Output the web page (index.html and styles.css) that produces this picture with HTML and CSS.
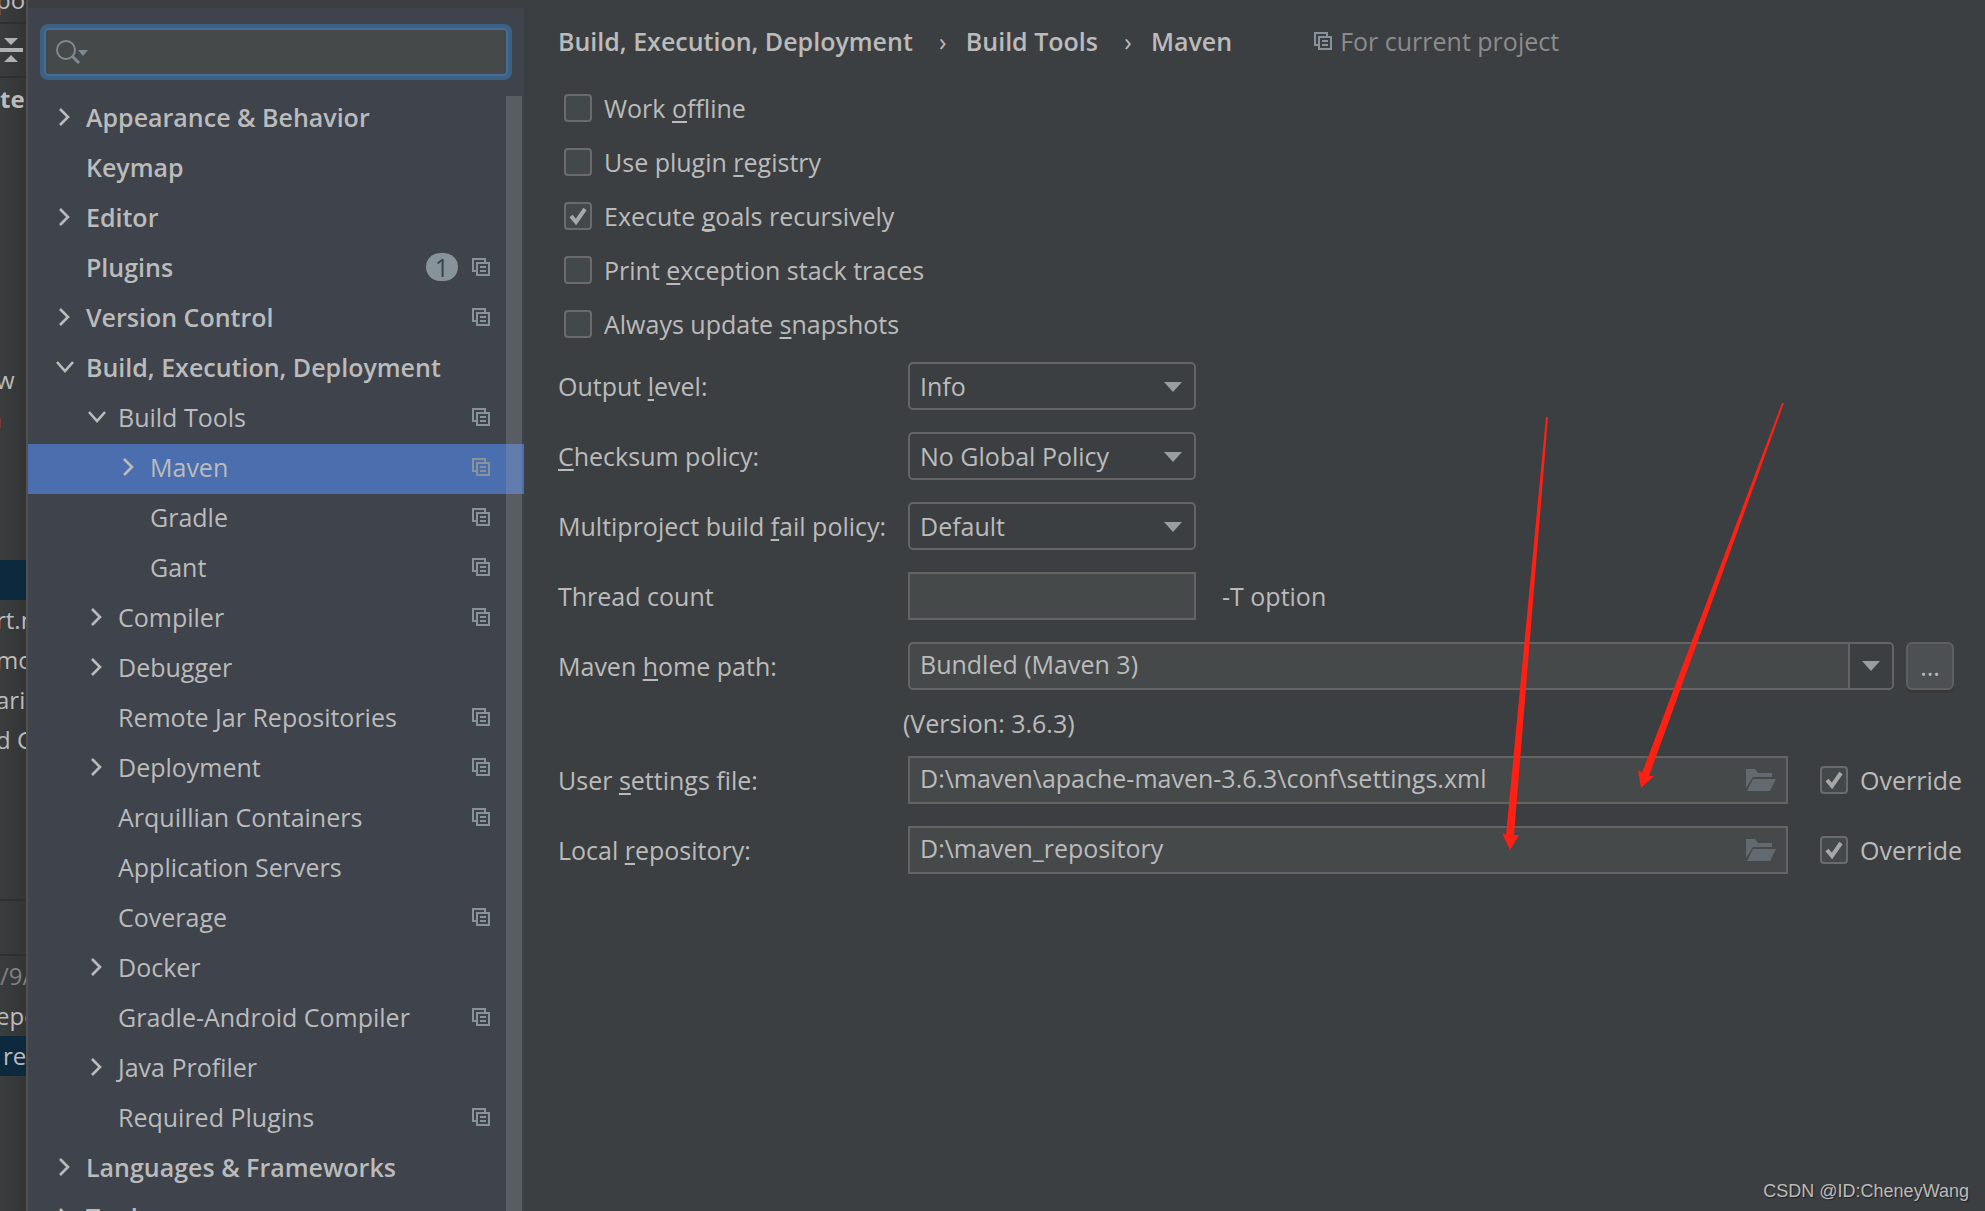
FILE: index.html
```
<!DOCTYPE html>
<html lang="en">
<head>
<meta charset="utf-8">
<title>Settings</title>
<link rel="stylesheet" href="styles.css">
</head>
<body>
<svg class="defs" aria-hidden="true">
  <symbol id="copy" viewBox="0 0 18 18"><path d="M4 13H1V1H13V4M5 5H17V17H5ZM8 9H14M8 13H14" fill="none" stroke="currentColor" stroke-width="2"/></symbol>
  <symbol id="right" viewBox="0 0 20 20"><path d="M6 2L14 10L6 18" fill="none" stroke="currentColor" stroke-width="2.6"/></symbol>
  <symbol id="down" viewBox="0 0 20 20"><path d="M3 5L11 14L19 5" fill="none" stroke="currentColor" stroke-width="2.6"/></symbol>
  <symbol id="folder" viewBox="0 0 30 22"><path d="M0 0H9L12 4H26V8H7L0 19Z M7 10H30L24 22H1Z" fill="currentColor"/></symbol>
  <symbol id="caret" viewBox="0 0 18 10"><path d="M0 0H18L9 10Z" fill="currentColor"/></symbol>
</svg>
<div class="app">
  <aside class="behind">
    <div class="cell top">po</div>
    <div class="cell tool"><svg width="24" height="24" viewBox="0 0 24 24"><path d="M4 0H18L11 7ZM0 10H23V14H0ZM4 24L11 17L18 24Z" fill="#afb1b3"/></svg></div>
    <div class="cell strong">ter</div>
    <div class="space first"></div>
    <div class="cell">w</div>
    <div class="space second"><i class="mark"></i></div>
    <div class="cell chosen"></div>
    <div class="cell">rt.m</div>
    <div class="cell">mo</div>
    <div class="cell">arie</div>
    <div class="cell">d G</div>
    <div class="space third"></div>
    <div class="cell header"></div>
    <div class="cell dim">/9/</div>
    <div class="cell">epe</div>
    <div class="cell chosen">res</div>
  </aside>
  <nav class="sidebar" aria-label="Settings sections">
    <div class="search">
      <svg width="34" height="26" viewBox="0 0 34 26"><circle cx="11" cy="11" r="9" fill="none" stroke="#7f8b91" stroke-width="2"/><path d="M17 17L24 24" stroke="#7f8b91" stroke-width="3"/><path d="M23 11H33L28 17Z" fill="#7f8b91"/></svg>
      <input type="text" aria-label="Search settings">
    </div>
    <div class="treebox">
    <ul class="tree">
      <li><a class="node group" href="#"><svg class="arrow"><use href="#right"/></svg><span>Appearance &amp; Behavior</span></a></li>
      <li><a class="node group" href="#"><i class="arrow"></i><span>Keymap</span></a></li>
      <li><a class="node group" href="#"><svg class="arrow"><use href="#right"/></svg><span>Editor</span></a></li>
      <li><a class="node group" href="#"><i class="arrow"></i><span>Plugins</span><b class="badge">1</b><svg class="copy"><use href="#copy"/></svg></a></li>
      <li><a class="node group" href="#"><svg class="arrow"><use href="#right"/></svg><span>Version Control</span><svg class="copy"><use href="#copy"/></svg></a></li>
      <li><a class="node group" href="#"><svg class="arrow"><use href="#down"/></svg><span>Build, Execution, Deployment</span></a></li>
      <li><a class="node child" href="#"><svg class="arrow"><use href="#down"/></svg><span>Build Tools</span><svg class="copy"><use href="#copy"/></svg></a></li>
      <li><a class="node leaf selected" href="#" aria-current="page"><svg class="arrow"><use href="#right"/></svg><span>Maven</span><svg class="copy"><use href="#copy"/></svg></a></li>
      <li><a class="node leaf" href="#"><i class="arrow"></i><span>Gradle</span><svg class="copy"><use href="#copy"/></svg></a></li>
      <li><a class="node leaf" href="#"><i class="arrow"></i><span>Gant</span><svg class="copy"><use href="#copy"/></svg></a></li>
      <li><a class="node child" href="#"><svg class="arrow"><use href="#right"/></svg><span>Compiler</span><svg class="copy"><use href="#copy"/></svg></a></li>
      <li><a class="node child" href="#"><svg class="arrow"><use href="#right"/></svg><span>Debugger</span></a></li>
      <li><a class="node child" href="#"><i class="arrow"></i><span>Remote Jar Repositories</span><svg class="copy"><use href="#copy"/></svg></a></li>
      <li><a class="node child" href="#"><svg class="arrow"><use href="#right"/></svg><span>Deployment</span><svg class="copy"><use href="#copy"/></svg></a></li>
      <li><a class="node child" href="#"><i class="arrow"></i><span>Arquillian Containers</span><svg class="copy"><use href="#copy"/></svg></a></li>
      <li><a class="node child" href="#"><i class="arrow"></i><span>Application Servers</span></a></li>
      <li><a class="node child" href="#"><i class="arrow"></i><span>Coverage</span><svg class="copy"><use href="#copy"/></svg></a></li>
      <li><a class="node child" href="#"><svg class="arrow"><use href="#right"/></svg><span>Docker</span></a></li>
      <li><a class="node child" href="#"><i class="arrow"></i><span>Gradle-Android Compiler</span><svg class="copy"><use href="#copy"/></svg></a></li>
      <li><a class="node child" href="#"><svg class="arrow"><use href="#right"/></svg><span>Java Profiler</span></a></li>
      <li><a class="node child" href="#"><i class="arrow"></i><span>Required Plugins</span><svg class="copy"><use href="#copy"/></svg></a></li>
      <li><a class="node group" href="#"><svg class="arrow"><use href="#right"/></svg><span>Languages &amp; Frameworks</span></a></li>
      <li><a class="node group" href="#"><svg class="arrow"><use href="#right"/></svg><span>Tools</span></a></li>
    </ul>
    <div class="scrollbar"></div>
    </div>
  </nav>
  <main class="main">
    <header class="crumbs">
      <span>Build, Execution, Deployment</span><span class="sep">›</span><span>Build Tools</span><span class="sep">›</span><span>Maven</span>
      <span class="scope"><svg class="copy"><use href="#copy"/></svg>For current project</span>
    </header>
    <form>
      <div class="checks">
        <label class="check"><input type="checkbox"><span>Work <u>o</u>ffline</span></label>
        <label class="check"><input type="checkbox"><span>Use plugin <u>r</u>egistry</span></label>
        <label class="check"><input type="checkbox" checked><span>Execute <u>g</u>oals recursively</span></label>
        <label class="check"><input type="checkbox"><span>Print <u>e</u>xception stack traces</span></label>
        <label class="check"><input type="checkbox"><span>Always update <u>s</u>napshots</span></label>
      </div>
      <div class="row"><label class="name" for="level">Output <u>l</u>evel:</label>
        <span class="select"><select id="level"><option>Info</option></select><svg class="caret"><use href="#caret"/></svg></span></div>
      <div class="row"><label class="name" for="checksum"><u>C</u>hecksum policy:</label>
        <span class="select"><select id="checksum"><option>No Global Policy</option></select><svg class="caret"><use href="#caret"/></svg></span></div>
      <div class="row"><label class="name" for="fail">Multiproject build <u>f</u>ail policy:</label>
        <span class="select"><select id="fail"><option>Default</option></select><svg class="caret"><use href="#caret"/></svg></span></div>
      <div class="row"><label class="name" for="threads">Thread count</label>
        <input class="field short" id="threads" type="text"><span class="hint">-T option</span></div>
      <div class="row home"><label class="name" for="home">Maven <u>h</u>ome path:</label>
        <span class="combo"><input id="home" type="text" value="Bundled (Maven 3)"><button type="button" aria-label="Show list"><svg class="caret"><use href="#caret"/></svg></button></span>
        <button class="browse" type="button">...</button></div>
      <p class="version">(Version: 3.6.3)</p>
      <div class="row"><label class="name" for="settings">User <u>s</u>ettings file:</label>
        <span class="field path"><input id="settings" type="text" value="D:\maven\apache-maven-3.6.3\conf\settings.xml"><svg class="folder"><use href="#folder"/></svg></span>
        <label class="check override"><input type="checkbox" checked><span>Override</span></label></div>
      <div class="row"><label class="name" for="repo">Local <u>r</u>epository:</label>
        <span class="field path"><input id="repo" type="text" value="D:\maven_repository"><svg class="folder"><use href="#folder"/></svg></span>
        <label class="check override"><input type="checkbox" checked><span>Override</span></label></div>
    </form>
    <svg class="pointers" width="290" height="456" viewBox="1500 400 290 456" aria-hidden="true"><path d="M1546 417H1548L1514 835L1519 835L1510 850L1502 833L1506 835ZM1782 403L1784 403L1649 776L1654 776L1641 788L1638 770L1642 773Z" fill="#ff2014"/></svg>
    <footer class="credit">CSDN @ID:CheneyWang</footer>
  </main>
</div>
</body>
</html>
```
FILE: styles.css
```
* { box-sizing: border-box; }
body {
  margin: 0;
  background: #3c3f41;
  color: #bbbbbb;
  font: 25px/40px "Open Sans", "Noto Sans", sans-serif;
}
.defs { position: absolute; width: 0; height: 0; }
.app {
  display: grid;
  grid-template-columns: 28px 496px 1fr;
  height: 100vh;
  overflow: hidden;
}
u { text-decoration-thickness: 2px; text-underline-offset: 3px; text-decoration-skip-ink: none; }
input, select, button { font: inherit; color: inherit; }

/* window behind the dialog */
.behind {
  border-right: 2px solid #515151;
  background: linear-gradient(90deg, #3a3d3e, #333535);
  overflow: hidden;
  font-size: 24px;
  white-space: nowrap;
  text-indent: -4px;
}
.cell { height: 40px; }
.top { height: 24px; border-bottom: 2px solid #2d2f30; line-height: 0; }
.tool { height: 54px; padding-top: 14px; border-bottom: 2px solid #2d2f30; line-height: 0; text-indent: 0; }
.strong { height: 42px; font-weight: 700; line-height: 42px; text-indent: 0; }
.first { height: 240px; }
.second { height: 160px; padding-top: 18px; }
.mark { display: block; width: 1px; height: 10px; background: #7a3a3c; }
.third { height: 139px; }
.header { height: 57px; border-top: 2px solid #2d2f30; border-bottom: 2px solid #2d2f30; }
.dim { color: #808080; text-indent: 0; }
.chosen { background: #0d293e; text-indent: 3px; }

/* sidebar */
.sidebar {
  display: flex;
  flex-direction: column;
  margin-top: 8px;
  background: #3e434c;
  overflow: hidden;
}
.search {
  display: flex;
  align-items: center;
  flex: none;
  height: 56px;
  margin: 16px 12px 14px;
  padding: 0 8px 0 11px;
  border: 4px solid #3d6185;
  border-radius: 8px;
  background: #45494a;
  box-shadow: inset 0 0 0 2px #466d94;
}
.search input { flex: 1; min-width: 0; height: 40px; border: 0; background: none; outline: none; }
.treebox { display: flex; flex: 1; min-height: 0; position: relative; }
.tree { flex: 1; margin: 0; padding: 0; list-style: none; }
.node {
  display: flex;
  align-items: center;
  gap: 12px;
  height: 50px;
  padding: 0 34px 4px 26px;
  color: inherit;
  text-decoration: none;
  white-space: nowrap;
}
.node span { flex: 1; }
.group { font-weight: 600; }
.child { padding-left: 58px; }
.leaf { padding-left: 90px; }
.selected { background: #4b6eaf; }
.arrow { width: 20px; height: 20px; flex: none; }
.copy { width: 18px; height: 18px; flex: none; color: #87939a; }
.badge {
  width: 32px;
  height: 28px;
  margin-right: 2px;
  border-radius: 14px;
  background: #87939a;
  color: #3e434c;
  font-weight: 400;
  line-height: 28px;
  text-align: center;
}
.scrollbar {
  position: absolute;
  top: 2px;
  right: 2px;
  bottom: 0;
  width: 16px;
  background: rgba(166, 166, 166, .25);
}

/* settings page */
.main { position: relative; padding: 0 25px 0 34px; white-space: nowrap; }
.crumbs { display: flex; align-items: center; height: 81px; font-weight: 600; }
.sep { width: 53px; padding-left: 7px; text-align: center; font-weight: 400; }
.scope {
  display: flex;
  align-items: center;
  gap: 8px;
  margin-left: 82px;
  color: #8c8c8c;
  font-weight: 400;
}
.check { display: flex; align-items: center; gap: 12px; }
.checks { padding: 0 0 11px 6px; }
.checks .check { height: 54px; width: max-content; }
.check input {
  appearance: none;
  flex: none;
  width: 28px;
  height: 28px;
  margin: 0;
  border: 2px solid #6b6b6b;
  border-radius: 4px;
  background: #43494a;
}
.check input:checked {
  background: #43494a url("data:image/svg+xml,%3Csvg xmlns='http://www.w3.org/2000/svg' viewBox='0 0 24 24'%3E%3Cpath d='M5 12L10 18L19 5' fill='none' stroke='%23a7a7a7' stroke-width='4'/%3E%3C/svg%3E") center / 24px 24px no-repeat;
}
.row { display: flex; align-items: center; height: 48px; margin-bottom: 22px; }
.name { flex: none; width: 350px; }
.select { position: relative; width: 288px; height: 48px; }
.select select {
  appearance: none;
  width: 100%;
  height: 48px;
  padding: 0 10px;
  border: 2px solid #646464;
  border-radius: 5px;
  background: #3c3f41;
}
.caret { width: 18px; height: 10px; color: #9a9da0; }
.select .caret { position: absolute; top: 20px; right: 14px; }
.field { height: 48px; border: 2px solid #646464; background: #45494a; }
.short { width: 288px; }
.hint { margin-left: 26px; }
.combo {
  display: flex;
  flex: 1;
  height: 48px;
  border: 2px solid #646464;
  border-radius: 5px;
  background: #45494a;
  overflow: hidden;
}
.combo input, .path input { flex: 1; min-width: 0; padding: 0 10px 4px; border: 0; background: none; }
.combo button {
  display: flex;
  align-items: center;
  justify-content: center;
  width: 44px;
  padding: 0;
  border: 0;
  border-left: 2px solid #646464;
  background: #3c3f41;
}
.home { margin: 0 6px 0 0; }
.browse {
  width: 48px;
  height: 48px;
  margin-left: 12px;
  padding: 0;
  border: 2px solid #5e6060;
  border-radius: 6px;
  background: #4c5052;
  box-shadow: 0 3px 0 #363839;
}
.version { margin: 0; padding-left: 345px; line-height: 66px; }
.path { display: flex; flex: 1; align-items: center; padding-right: 10px; }
.folder { width: 30px; height: 22px; color: #616a6e; }
.override { width: 140px; margin-left: 32px; }
.pointers { position: absolute; left: 976px; top: 400px; pointer-events: none; }
.credit {
  position: absolute;
  right: 16px;
  bottom: 6px;
  font: 18px/28px "Liberation Sans", Arial, sans-serif;
  text-shadow: 1px 1px 1px #222;
}
```
